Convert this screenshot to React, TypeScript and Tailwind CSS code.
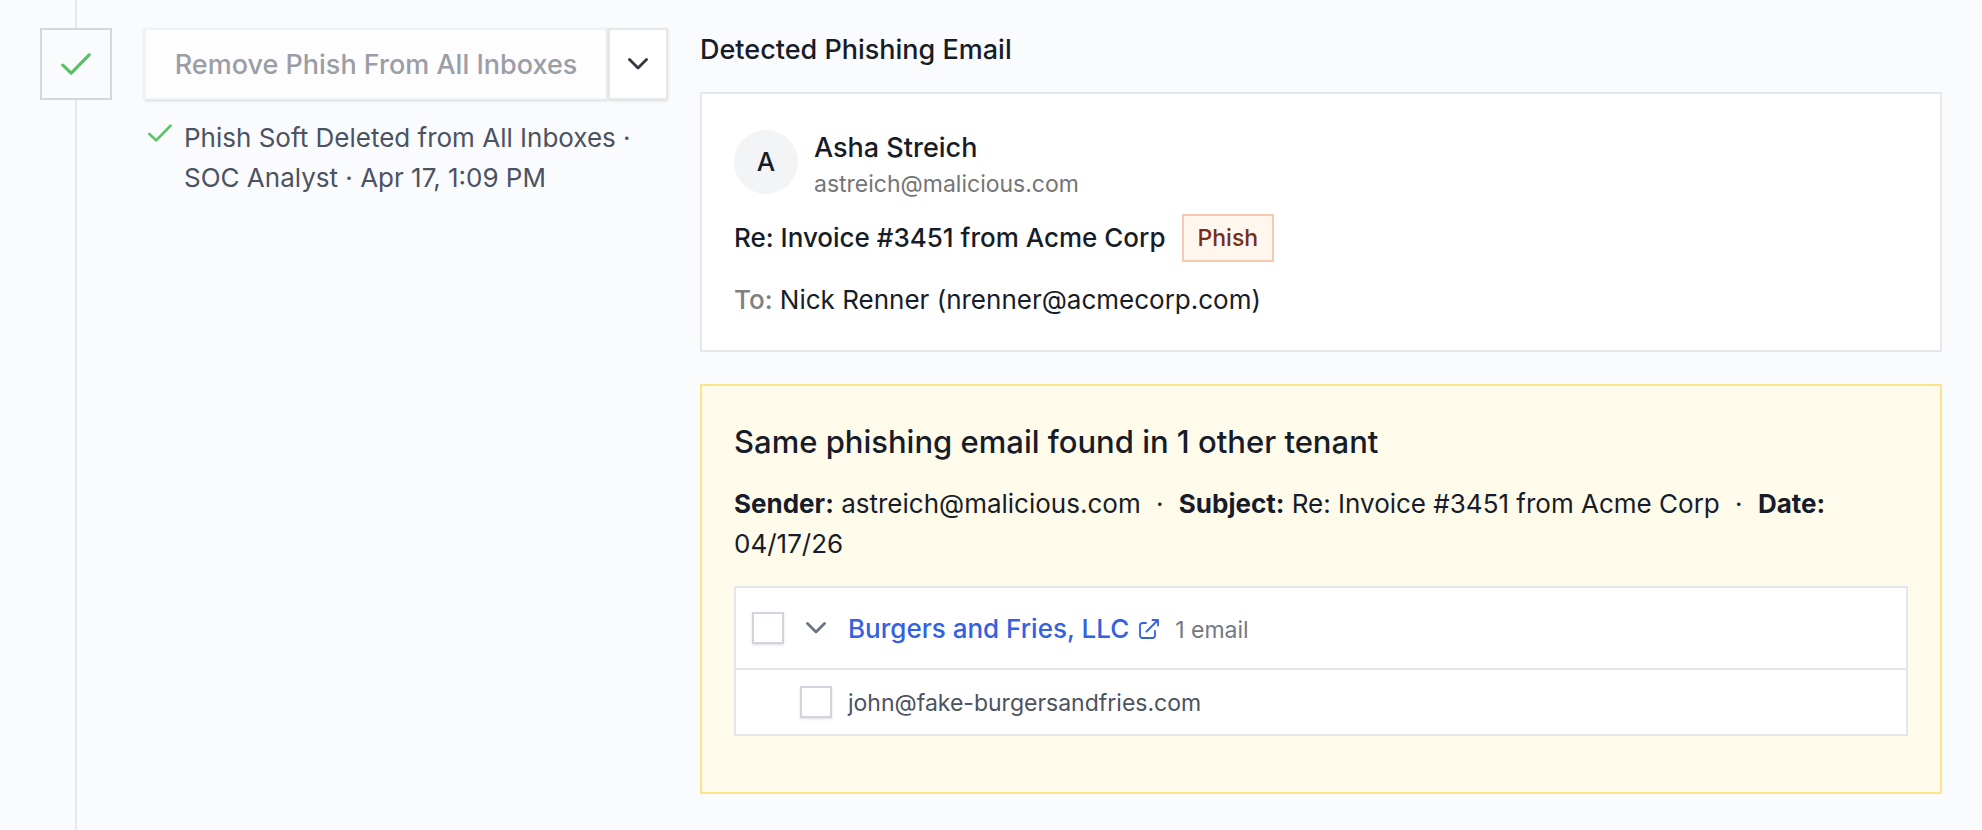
import { useState } from 'react';

const Check = ({ className }: { className: string }) => (
  <svg viewBox="0 0 30 22" fill="none" className={className} aria-hidden="true">
    <path
      d="M1.8 12.200 10.200 20.200 28.200 1.800"
      stroke="currentColor"
      strokeWidth="3.200"
      strokeLinecap="round"
      strokeLinejoin="round"
    />
  </svg>
);

const Chevron = ({ className }: { className: string }) => (
  <svg viewBox="0 0 20 12" fill="none" className={className} aria-hidden="true">
    <path
      d="M1.5 1.5 10 10l8.5-8.5"
      stroke="currentColor"
      strokeWidth="2.8"
      strokeLinecap="round"
      strokeLinejoin="round"
    />
  </svg>
);

const ExternalLink = () => (
  <svg viewBox="0 0 20 20" fill="none" className="size-5" aria-hidden="true">
    <path
      d="M7 4H3.500A2.500 2.500 0 0 0 1 6.500v10A2.500 2.500 0 0 0 3.500 19h10a2.500 2.500 0 0 0 2.500-2.500V12M7.500 12.500 19 1M13.500 1H19v5.500"
      stroke="currentColor"
      strokeWidth="1.8"
      strokeLinecap="round"
      strokeLinejoin="round"
    />
  </svg>
);

const checkbox =
  'size-8 shrink-0 appearance-none border-2 border-[#d1d5db] bg-white shadow-sm checked:bg-blue-600';

const App = () => {
  const [open, setOpen] = useState(true);

  return (
    <div className="grid min-h-screen grid-cols-[72px_minmax(0,524fr)_minmax(0,1242fr)] gap-x-8 bg-[#fafbfd] px-10 font-['Inter',sans-serif] text-[26px] leading-10 text-[#171c28]">
      {/* timeline */}
      <div className="flex flex-col items-center">
        <div className="h-7 w-0.5 bg-[#e5e7eb]" />
        <div className="flex size-18 items-center justify-center border-2 border-[#d6d7d9] text-[#57c266]">
          <Check className="w-[30px]" />
        </div>
        <div className="w-0.5 flex-1 bg-[#e5e7eb]" />
      </div>

      {/* action */}
      <section className="pt-7">
        <div className="flex h-18">
          <button
            type="button"
            disabled
            className="flex-1 border-2 border-[#f0f1f4] bg-[#fdfdfe] pt-0.5 text-[27px] font-medium text-[#9b9ea6] shadow-sm"
          >
            Remove Phish From All Inboxes
          </button>
          <button
            type="button"
            aria-label="More actions"
            className="flex w-15 items-center justify-center border-2 border-[#e5e7eb] bg-white text-[#2f3644] shadow-sm"
          >
            <Chevron className="h-3 w-5" />
          </button>
        </div>
        <div className="flex gap-3 pt-4.5 pl-1">
          <Check className="mt-1.5 h-[18px] w-6 shrink-0 text-[#57c266]" />
          <p className="text-[#4b5262]">
            Phish Soft Deleted from All Inboxes · SOC Analyst · Apr 17, 1:09 PM
          </p>
        </div>
      </section>

      {/* findings */}
      <main className="py-7">
        <h2 className="pt-0.5 text-[27px] font-medium">Detected Phishing Email</h2>

        <article className="mt-5.5 h-65 border-2 border-[#e5e7eb] bg-white px-8 pt-9">
          <div className="flex gap-4">
            <div className="flex size-16 items-center justify-center rounded-full bg-[#f3f4f6] font-medium">
              A
            </div>
            <div>
              <p className="text-[27px] leading-9 font-medium">Asha Streich</p>
              <p className="text-[23px] leading-9 text-[#757575]">
                astreich@malicious.com
              </p>
            </div>
          </div>
          <div className="mt-3 flex items-center gap-4">
            <h3 className="font-medium">Re: Invoice #3451 from Acme Corp</h3>
            <span className="border-2 border-[#f9c8ae] bg-[#fff6ed] px-3.5 text-[23px] leading-11 font-medium text-[#732e1c]">
              Phish
            </span>
          </div>
          <p className="mt-4.5">
            <span className="font-medium text-[#808080]">To:</span> Nick Renner
            (nrenner@acmecorp.com)
          </p>
        </article>

        <section className="mt-8 border-2 border-[#fbe588] bg-[#fffbeb] px-8 pt-9 pb-14">
          <h3 className="text-[31px] font-medium">
            Same phishing email found in 1 other tenant
          </h3>
          <p className="mt-5.5">
            <b>Sender:</b> astreich@malicious.com <span className="mx-2">·</span>{' '}
            <b>Subject:</b> Re: Invoice #3451 from Acme Corp{' '}
            <span className="mx-2">·</span> <b>Date:</b> 04/17/26
          </p>

          <ul className="mt-5.5 border-2 border-[#e4e6ec] bg-white">
            <li className="flex h-20 items-center px-4">
              <input
                type="checkbox"
                aria-label="Burgers and Fries, LLC"
                className={checkbox}
              />
              <button
                type="button"
                aria-label="Toggle emails"
                aria-expanded={open}
                onClick={() => setOpen(!open)}
                className="flex w-16 justify-center text-[#6b7280]"
              >
                <Chevron className="h-3 w-5" />
              </button>
              <a
                href="#tenant"
                className="flex items-center gap-2.5 pt-0.5 font-medium text-[#3460e2]"
              >
                Burgers and Fries, LLC
                <ExternalLink />
              </a>
              <span className="ml-4 pt-1 text-[23px] text-[#737883]">1 email</span>
            </li>
            {open && (
              <li className="flex h-[66px] items-center border-t-2 border-[#e4e6ec] pl-16">
                <input type="checkbox" id="john" className={checkbox} />
                <label
                  htmlFor="john"
                  className="pt-0.5 pl-4 text-[23px] text-[#4b5262]"
                >
                  john@fake-burgersandfries.com
                </label>
              </li>
            )}
          </ul>
        </section>
      </main>
    </div>
  );
};

export default App;
